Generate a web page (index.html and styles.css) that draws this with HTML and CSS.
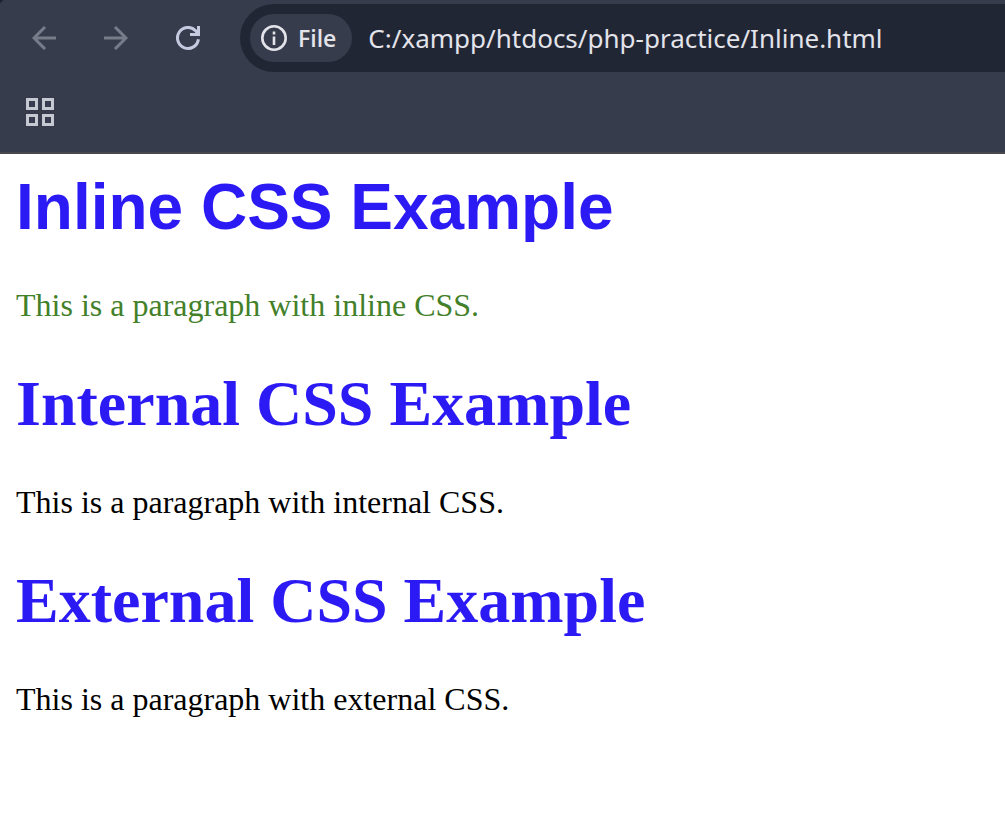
FILE: index.html
```html
<!DOCTYPE html>
<html lang="en">
<head>
<meta charset="utf-8">
<title>Inline CSS Example</title>
<link rel="stylesheet" href="styles.css">
</head>
<body>
<header class="browser">
  <div class="toolbar">
    <nav class="nav" aria-label="History">
      <button class="icon-button icon-button-muted" type="button" aria-label="Back">
        <svg width="24" height="24" viewBox="0 0 24 24" fill="none" stroke="currentColor" stroke-width="3"><path d="M24 12H2M13 1L2 12l11 11"/></svg>
      </button>
      <button class="icon-button icon-button-muted" type="button" aria-label="Forward">
        <svg width="24" height="24" viewBox="0 0 24 24" fill="none" stroke="currentColor" stroke-width="3"><path d="M0 12h22M11 1l11 11-11 11"/></svg>
      </button>
      <button class="icon-button" type="button" aria-label="Reload">
        <svg width="24" height="24" viewBox="0 0 24 24" fill="none" stroke="currentColor" stroke-width="3"><path d="M22.400 13.200A10.500 10.500 0 1 1 19.500 4.600L22 7M14 8.500h8.500V0"/><path d="M18 9l4-7v7z" fill="currentColor" stroke="none"/></svg>
      </button>
    </nav>
    <div class="address">
      <button class="chip" type="button">
        <svg width="26" height="26" viewBox="0 0 26 26" fill="none" stroke="currentColor" stroke-width="2.600"><circle cx="13" cy="13" r="11.700"/><path d="M13 11.500V20M13 6.500v3"/></svg>
        File
      </button>
      <input class="url" type="text" aria-label="Address" value="C:/xampp/htdocs/php-practice/Inline.html" spellcheck="false">
    </div>
  </div>
  <div class="bookmarks">
    <button class="icon-button" type="button" aria-label="Apps">
      <svg class="apps" width="28" height="28" viewBox="0 0 28 28" fill="none" stroke="currentColor" stroke-width="3"><path d="M1.500 1.500h9v9h-9zM17.500 1.500h9v9h-9zM1.500 17.500h9v9h-9zM17.500 17.500h9v9h-9z"/></svg>
    </button>
  </div>
</header>
<main class="page">
  <h1 class="heading heading-sans">Inline CSS Example</h1>
  <p class="text text-green">This is a paragraph with inline CSS.</p>
  <h1 class="heading">Internal CSS Example</h1>
  <p class="text">This is a paragraph with internal CSS.</p>
  <h1 class="heading">External CSS Example</h1>
  <p class="text">This is a paragraph with external CSS.</p>
</main>
</body>
</html>
```
FILE: styles.css
```css
* {
  box-sizing: border-box;
}

body {
  margin: 0;
  background: #fff;
}

.browser {
  background: linear-gradient(135deg, #1f2433 2px, #373c4c 3px);
  border-bottom: 2px solid #48484c;
}

.toolbar {
  display: flex;
  align-items: center;
  height: 76px;
}

.nav {
  display: flex;
  flex: none;
  gap: 24px;
  padding: 0 28px 0 20px;
}

.icon-button {
  display: flex;
  align-items: center;
  justify-content: center;
  width: 48px;
  height: 48px;
  padding: 0;
  border: 0;
  background: none;
  color: #c4cae0;
}

.icon-button-muted {
  color: #787c8a;
}

.address {
  display: flex;
  flex: 1;
  align-items: center;
  gap: 16px;
  min-width: 0;
  height: 68px;
  padding-left: 10px;
  border-radius: 34px 0 0 34px;
  background: #212635;
}

.chip {
  display: flex;
  flex: none;
  align-items: center;
  gap: 11px;
  height: 48px;
  padding: 0 16px 0 11px;
  border: 0;
  border-radius: 24px;
  background: #373c4c;
  color: #e3e3ea;
  font: 600 23px/32px "Open Sans", sans-serif;
}

.url {
  flex: 1;
  min-width: 0;
  height: 48px;
  padding: 0;
  border: 0;
  outline: 0;
  background: none;
  color: #e3e3ea;
  font: 400 26px/36px "Noto Sans", sans-serif;
}

.bookmarks {
  display: flex;
  align-items: center;
  height: 76px;
  padding: 0 16px 4px;
}

.apps {
  color: #c6c9d2;
}

.page {
  display: flex;
  flex-direction: column;
  gap: 43px;
  padding: 16px;
}

.heading {
  margin: 0;
  color: #2c1af5;
  font: 700 64px/74px "Liberation Serif", serif;
}

.heading-sans {
  font-family: "Liberation Sans", sans-serif;
}

.text {
  margin: 0;
  color: #000;
  font: 400 32px/37px "Liberation Serif", serif;
}

.text-green {
  color: #43802a;
}
```
